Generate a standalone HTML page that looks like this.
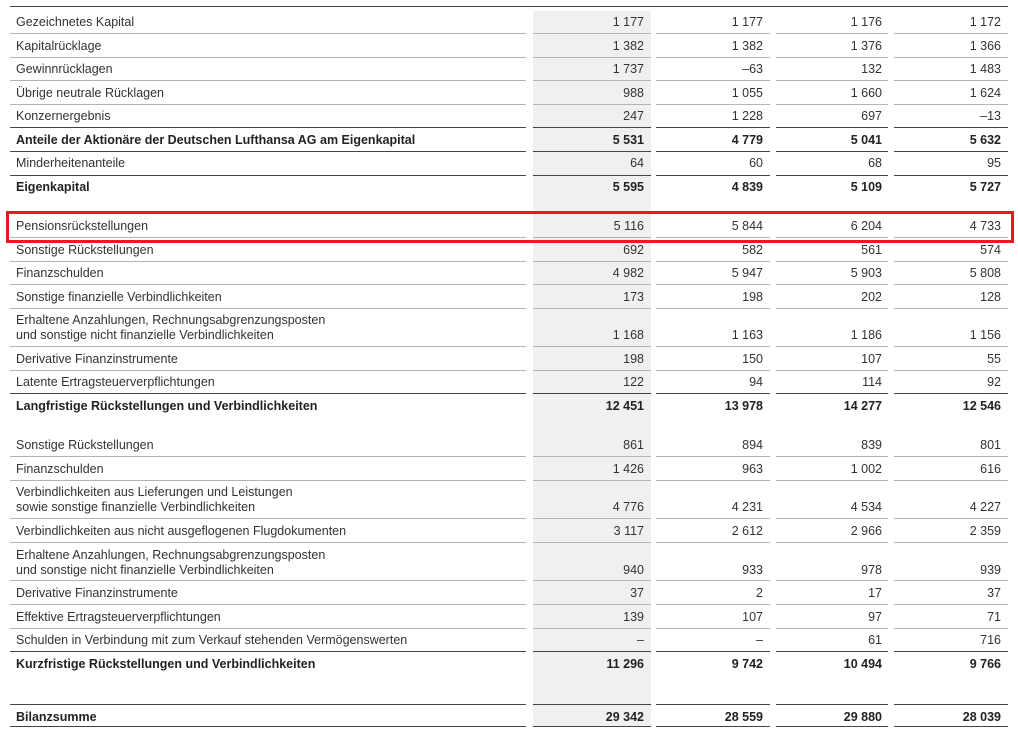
<!DOCTYPE html>
<html><head><meta charset="utf-8"><style>
body{margin:0;background:#fff;width:1018px;height:729px;position:relative;overflow:hidden;font-family:"Liberation Sans",Arial,sans-serif;font-size:12.5px;color:#333}
.g{position:absolute;left:533px;width:118px;top:11px;height:715px;background:#f0f0f0}
.r{position:absolute;left:0;width:1018px;height:16px;line-height:16px;margin-top:1px}
.r span{position:absolute;top:0;white-space:nowrap}
.l{left:16px}
.a{right:374px}.b{right:255px}.c{right:136px}.d{right:17px}
.bo{font-weight:bold;color:#222}
.k{position:absolute;left:0;width:1018px;height:1px}
.k i{position:absolute;top:0;height:1px;background:#b4b4b4}
.k.dk i{background:#444}
.k i:nth-child(1){left:10px;width:516px}
.k i:nth-child(2){left:533px;width:118px}
.k i:nth-child(3){left:656px;width:114px}
.k i:nth-child(4){left:776px;width:112px}
.k i:nth-child(5){left:894px;width:114px}
.red{position:absolute;left:6px;top:211px;width:1002px;height:26px;border:3px solid #e31b23}
</style></head><body>
<div class="g"></div>
<div class="k dk" style="top:6px"><i style="width:998px"></i></div>

<div class="r" style="top:13px"><span class="l">Gezeichnetes Kapital</span><span class="a">1 177</span><span class="b">1 177</span><span class="c">1 176</span><span class="d">1 172</span></div>
<div class="k" style="top:33px"><i></i><i></i><i></i><i></i><i></i></div>
<div class="r" style="top:37px"><span class="l">Kapitalrücklage</span><span class="a">1 382</span><span class="b">1 382</span><span class="c">1 376</span><span class="d">1 366</span></div>
<div class="k" style="top:57px"><i></i><i></i><i></i><i></i><i></i></div>
<div class="r" style="top:60px"><span class="l">Gewinnrücklagen</span><span class="a">1 737</span><span class="b">–63</span><span class="c">132</span><span class="d">1 483</span></div>
<div class="k" style="top:80px"><i></i><i></i><i></i><i></i><i></i></div>
<div class="r" style="top:84px"><span class="l">Übrige neutrale Rücklagen</span><span class="a">988</span><span class="b">1 055</span><span class="c">1 660</span><span class="d">1 624</span></div>
<div class="k" style="top:104px"><i></i><i></i><i></i><i></i><i></i></div>
<div class="r" style="top:107px"><span class="l">Konzernergebnis</span><span class="a">247</span><span class="b">1 228</span><span class="c">697</span><span class="d">–13</span></div>
<div class="k dk" style="top:127px"><i></i><i></i><i></i><i></i><i></i></div>
<div class="r bo" style="top:131px"><span class="l">Anteile der Aktionäre der Deutschen Lufthansa AG am Eigenkapital</span><span class="a">5 531</span><span class="b">4 779</span><span class="c">5 041</span><span class="d">5 632</span></div>
<div class="k dk" style="top:151px"><i></i><i></i><i></i><i></i><i></i></div>
<div class="r" style="top:154px"><span class="l">Minderheitenanteile</span><span class="a">64</span><span class="b">60</span><span class="c">68</span><span class="d">95</span></div>
<div class="k dk" style="top:175px"><i></i><i></i><i></i><i></i><i></i></div>
<div class="r bo" style="top:178px"><span class="l">Eigenkapital</span><span class="a">5 595</span><span class="b">4 839</span><span class="c">5 109</span><span class="d">5 727</span></div>

<div class="r" style="top:217px"><span class="l">Pensionsrückstellungen</span><span class="a">5 116</span><span class="b">5 844</span><span class="c">6 204</span><span class="d">4 733</span></div>
<div class="k" style="top:237px"><i></i><i></i><i></i><i></i><i></i></div>
<div class="r" style="top:241px"><span class="l">Sonstige Rückstellungen</span><span class="a">692</span><span class="b">582</span><span class="c">561</span><span class="d">574</span></div>
<div class="k" style="top:261px"><i></i><i></i><i></i><i></i><i></i></div>
<div class="r" style="top:264px"><span class="l">Finanzschulden</span><span class="a">4 982</span><span class="b">5 947</span><span class="c">5 903</span><span class="d">5 808</span></div>
<div class="k" style="top:284px"><i></i><i></i><i></i><i></i><i></i></div>
<div class="r" style="top:288px"><span class="l">Sonstige finanzielle Verbindlichkeiten</span><span class="a">173</span><span class="b">198</span><span class="c">202</span><span class="d">128</span></div>
<div class="k" style="top:308px"><i></i><i></i><i></i><i></i><i></i></div>
<div class="r" style="top:311px"><span class="l">Erhaltene Anzahlungen, Rechnungsabgrenzungsposten</span></div>
<div class="r" style="top:326px"><span class="l">und sonstige nicht finanzielle Verbindlichkeiten</span><span class="a">1 168</span><span class="b">1 163</span><span class="c">1 186</span><span class="d">1 156</span></div>
<div class="k" style="top:346px"><i></i><i></i><i></i><i></i><i></i></div>
<div class="r" style="top:350px"><span class="l">Derivative Finanzinstrumente</span><span class="a">198</span><span class="b">150</span><span class="c">107</span><span class="d">55</span></div>
<div class="k" style="top:370px"><i></i><i></i><i></i><i></i><i></i></div>
<div class="r" style="top:373px"><span class="l">Latente Ertragsteuerverpflichtungen</span><span class="a">122</span><span class="b">94</span><span class="c">114</span><span class="d">92</span></div>
<div class="k dk" style="top:393px"><i></i><i></i><i></i><i></i><i></i></div>
<div class="r bo" style="top:397px"><span class="l">Langfristige Rückstellungen und Verbindlichkeiten</span><span class="a">12 451</span><span class="b">13 978</span><span class="c">14 277</span><span class="d">12 546</span></div>

<div class="r" style="top:436px"><span class="l">Sonstige Rückstellungen</span><span class="a">861</span><span class="b">894</span><span class="c">839</span><span class="d">801</span></div>
<div class="k" style="top:456px"><i></i><i></i><i></i><i></i><i></i></div>
<div class="r" style="top:460px"><span class="l">Finanzschulden</span><span class="a">1 426</span><span class="b">963</span><span class="c">1 002</span><span class="d">616</span></div>
<div class="k" style="top:480px"><i></i><i></i><i></i><i></i><i></i></div>
<div class="r" style="top:483px"><span class="l">Verbindlichkeiten aus Lieferungen und Leistungen</span></div>
<div class="r" style="top:498px"><span class="l">sowie sonstige finanzielle Verbindlichkeiten</span><span class="a">4 776</span><span class="b">4 231</span><span class="c">4 534</span><span class="d">4 227</span></div>
<div class="k" style="top:518px"><i></i><i></i><i></i><i></i><i></i></div>
<div class="r" style="top:522px"><span class="l">Verbindlichkeiten aus nicht ausgeflogenen Flugdokumenten</span><span class="a">3 117</span><span class="b">2 612</span><span class="c">2 966</span><span class="d">2 359</span></div>
<div class="k" style="top:542px"><i></i><i></i><i></i><i></i><i></i></div>
<div class="r" style="top:546px"><span class="l">Erhaltene Anzahlungen, Rechnungsabgrenzungsposten</span></div>
<div class="r" style="top:561px"><span class="l">und sonstige nicht finanzielle Verbindlichkeiten</span><span class="a">940</span><span class="b">933</span><span class="c">978</span><span class="d">939</span></div>
<div class="k" style="top:580px"><i></i><i></i><i></i><i></i><i></i></div>
<div class="r" style="top:584px"><span class="l">Derivative Finanzinstrumente</span><span class="a">37</span><span class="b">2</span><span class="c">17</span><span class="d">37</span></div>
<div class="k" style="top:604px"><i></i><i></i><i></i><i></i><i></i></div>
<div class="r" style="top:608px"><span class="l">Effektive Ertragsteuerverpflichtungen</span><span class="a">139</span><span class="b">107</span><span class="c">97</span><span class="d">71</span></div>
<div class="k" style="top:628px"><i></i><i></i><i></i><i></i><i></i></div>
<div class="r" style="top:631px"><span class="l">Schulden in Verbindung mit zum Verkauf stehenden Vermögenswerten</span><span class="a">–</span><span class="b">–</span><span class="c">61</span><span class="d">716</span></div>
<div class="k dk" style="top:651px"><i></i><i></i><i></i><i></i><i></i></div>
<div class="r bo" style="top:655px"><span class="l">Kurzfristige Rückstellungen und Verbindlichkeiten</span><span class="a">11 296</span><span class="b">9 742</span><span class="c">10 494</span><span class="d">9 766</span></div>

<div class="k dk" style="top:704px"><i></i><i></i><i></i><i></i><i></i></div>
<div class="r bo" style="top:708px"><span class="l">Bilanzsumme</span><span class="a">29 342</span><span class="b">28 559</span><span class="c">29 880</span><span class="d">28 039</span></div>
<div class="k dk" style="top:726px"><i></i><i></i><i></i><i></i><i></i></div>

<div class="red"></div>
</body></html>
